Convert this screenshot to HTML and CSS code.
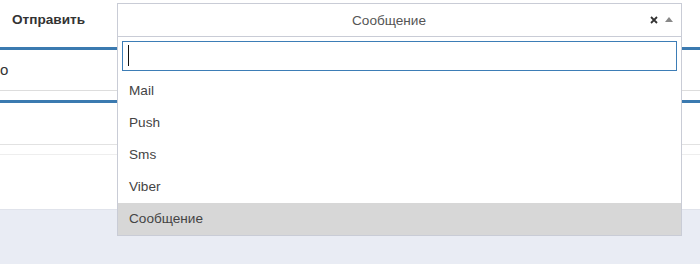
FILE: index.html
```html
<!DOCTYPE html>
<html lang="ru">
<head>
  <meta charset="UTF-8" />
  <title>Отправить</title>
  <meta name="viewport" content="width=device-width, initial-scale=1.0" />
  <link rel="stylesheet" href="styles.css">
</head>
<body>
  <div class="panel">
    <div class="send-row">
      <label class="send-label">Отправить</label>
      <div class="select-wrap">
        <div class="select-box">
          <span class="select-value">Сообщение</span>
          <span class="select-clear">
            <svg width="8" height="8" viewBox="0 0 8 8"><path d="M1 1L7 7M7 1L1 7" stroke="#333" stroke-width="1.8" /></svg>
          </span>
          <span class="select-arrow"></span>
        </div>
        <div class="select-dropdown">
          <div class="search-wrap">
            <div class="search-field"><span class="caret"></span></div>
          </div>
          <ul class="options">
            <li>Mail</li>
            <li>Push</li>
            <li>Sms</li>
            <li>Viber</li>
            <li class="highlighted">Сообщение</li>
          </ul>
        </div>
      </div>
    </div>

    <div class="tab-head">о</div>
    <div class="tab-body">
      <div class="tab-row"></div>
      <div class="tab-row light"></div>
    </div>
  </div>
</body>
</html>
```

FILE: styles.css
```css
html, body {
  min-height: 100%;
  height: 100%;
}
body {
  margin: 0;
  background: #e9ecf4;
  font-family: 'Liberation Sans', Arial, sans-serif;
  font-size: 13.6px;
  color: #333;
}
.panel {
  position: relative;
  background: white;
  height: 209px;
  border-bottom: 1px solid #e0e3eb;
}
.send-row {
  display: flex;
  align-items: flex-start;
  height: 47px;
}
.send-label {
  box-sizing: border-box;
  width: 117px;
  padding-left: 12px;
  margin-top: 3px;
  line-height: 34px;
  font-weight: bold;
  color: #333;
}
.select-wrap {
  position: relative;
  margin-top: 3px;
  width: 565px;
  z-index: 10;
}
.select-box {
  box-sizing: border-box;
  height: 34px;
  border: 1px solid #c9ccd6;
  display: flex;
  align-items: center;
  background: white;
}
.select-value {
  flex: 1;
  text-align: center;
  color: #555;
  padding-left: 10px;
}
.select-clear {
  display: flex;
  margin-right: 7px;
}
.select-arrow {
  width: 0;
  height: 0;
  border-style: solid;
  border-width: 0 4px 5px 4px;
  border-color: transparent transparent #888 transparent;
  margin-right: 8px;
  margin-bottom: 1px;
}
.select-dropdown {
  position: absolute;
  top: 100%;
  left: 0;
  right: 0;
  background: white;
  border: 1px solid #c9ccd6;
  border-top: none;
}
.search-wrap {
  padding: 4px;
}
.search-field {
  box-sizing: border-box;
  height: 30px;
  border: 1px solid #3d7db6;
  padding: 3px 0 0 5px;
}
.caret {
  display: block;
  width: 1px;
  height: 21px;
  background: #111;
}
.options {
  list-style: none;
  margin: 0;
  padding: 0;
}
.options li {
  height: 32px;
  line-height: 32px;
  padding: 0 11px;
  color: #444;
}
.options li.highlighted {
  background: #d7d7d7;
}
.tab-head {
  height: 40px;
  line-height: 40px;
  border-top: 3px solid #3b7ab0;
  border-bottom: 1px solid #dddddd;
  font-size: 15px;
  color: #333;
}
.tab-body {
  margin-top: 9px;
  border-top: 3px solid #3b7ab0;
}
.tab-row {
  height: 41px;
  border-bottom: 1px solid #e2e2e2;
}
.tab-row.light {
  height: 9px;
  border-bottom-color: #eeeeee;
}
```
